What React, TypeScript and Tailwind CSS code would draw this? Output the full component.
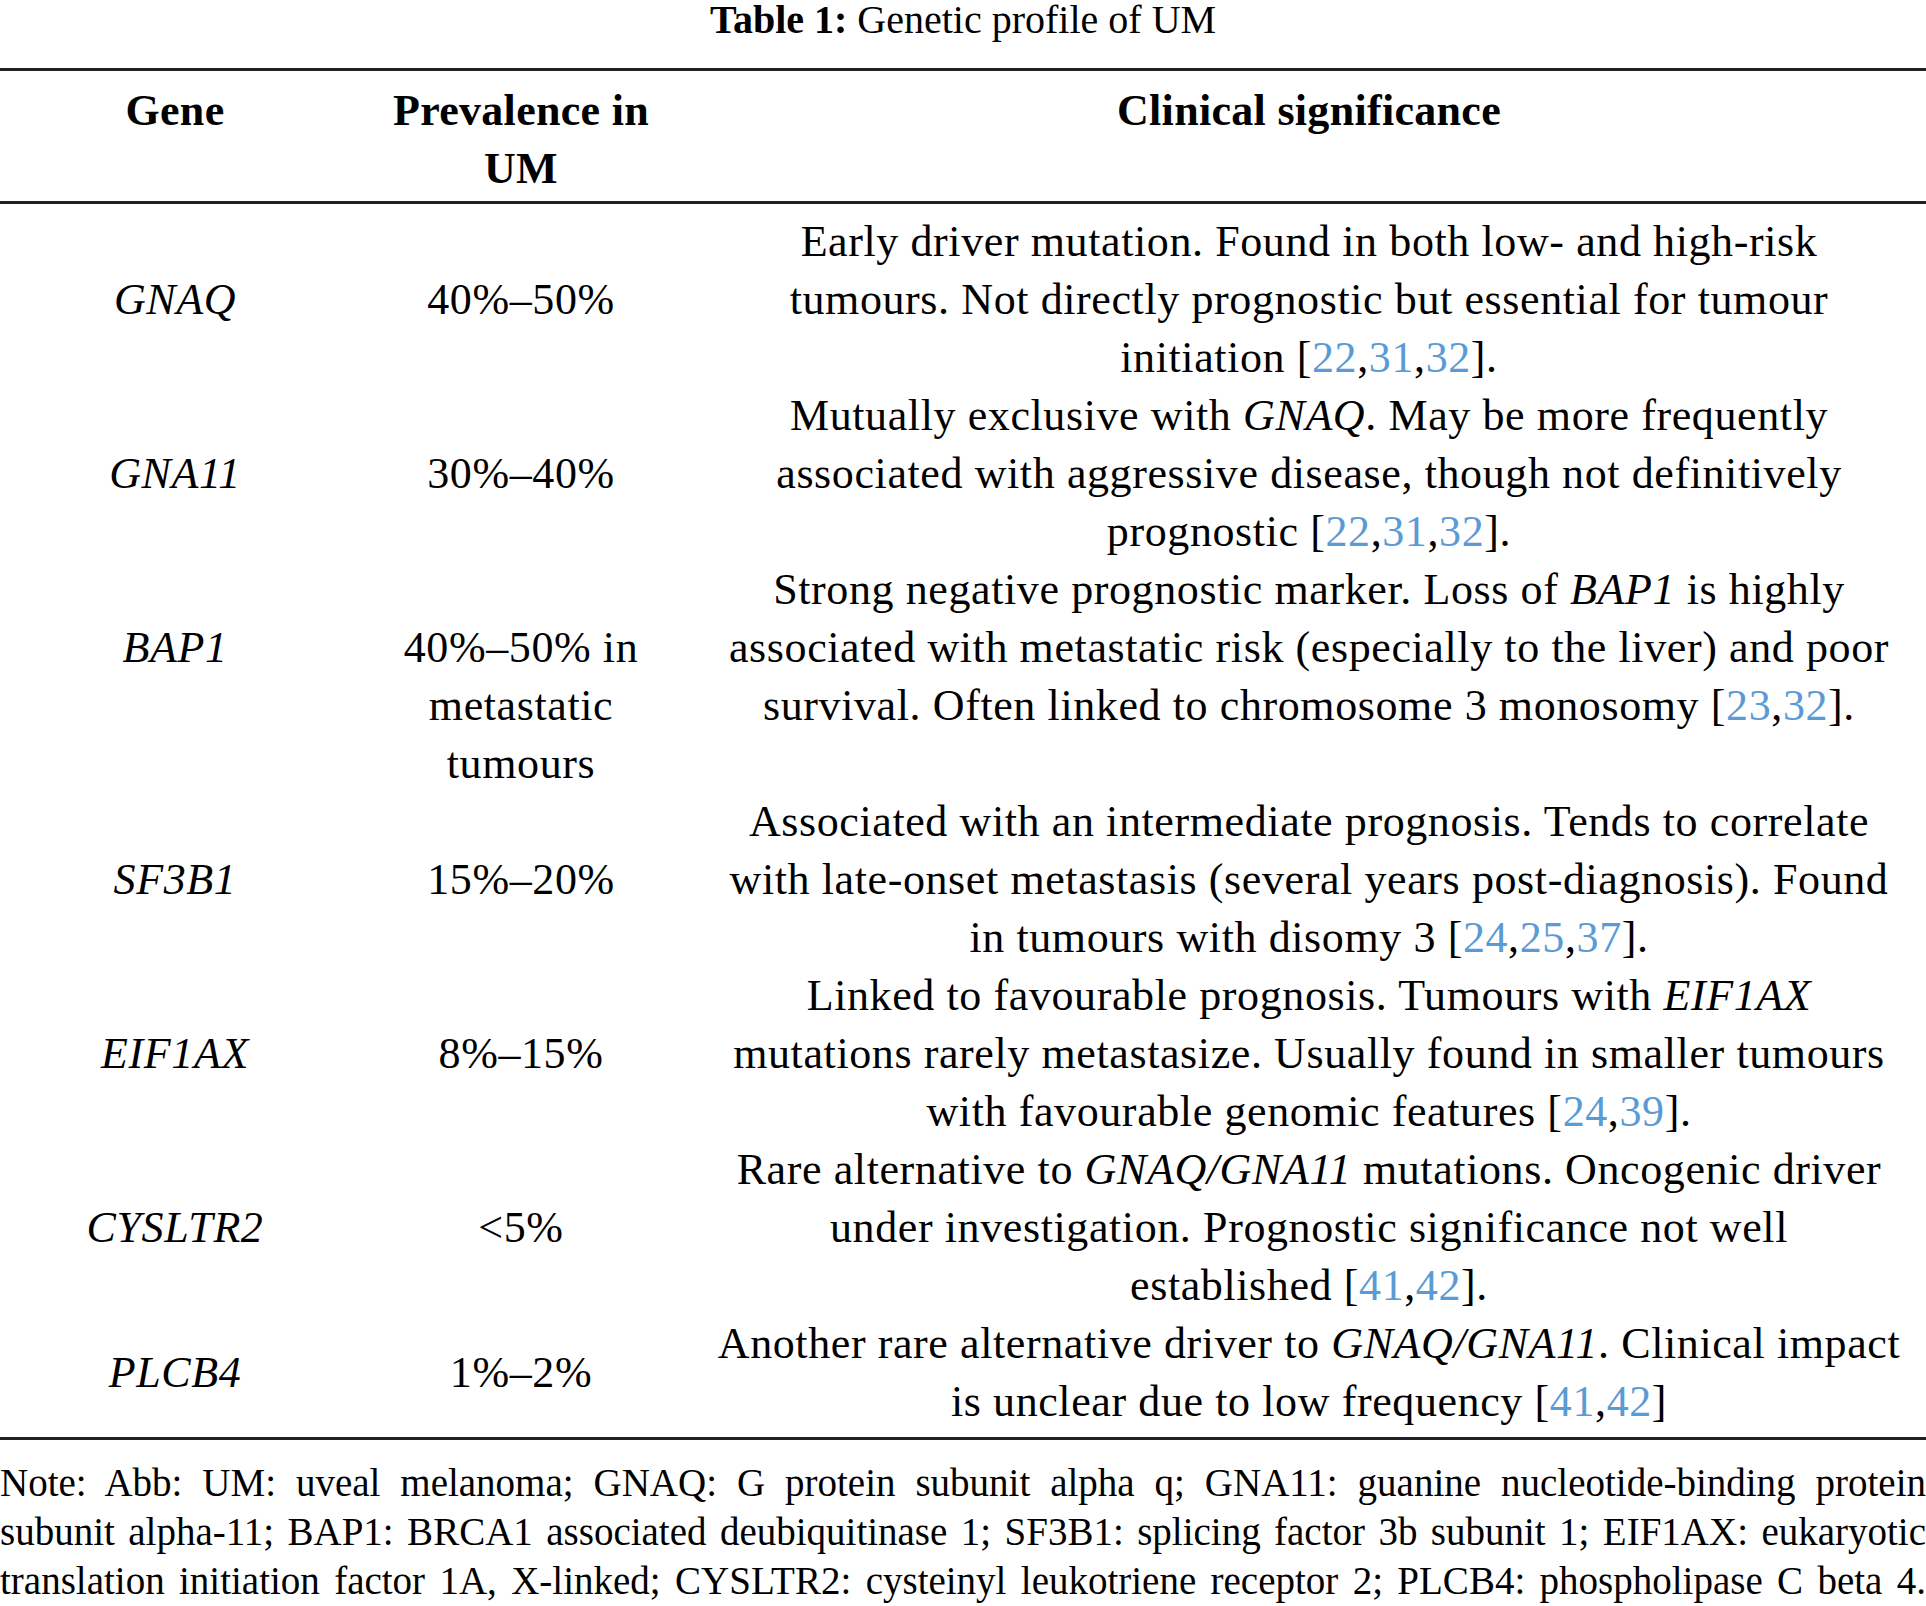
import type { ReactNode } from 'react';

const Cite = ({ n }: { n: string }) => <span className="text-[#5b9bd5]">{n}</span>;

const refs = (...ns: string[]) => (
  <>
    [
    {ns.map((n, i) => (
      <span key={n}>
        {i > 0 && ','}
        <Cite n={n} />
      </span>
    ))}
    ]
  </>
);

type Row = {
  gene: string;
  prev: ReactNode[];
  clin: ReactNode[];
  // BAP1 row sits on 4 line slots, with gene and prevalence pushed down one
  offset?: boolean;
};

const ROWS: Row[] = [
  {
    gene: 'GNAQ',
    prev: ['40%–50%'],
    clin: [
      'Early driver mutation. Found in both low- and high-risk',
      'tumours. Not directly prognostic but essential for tumour',
      <>initiation {refs('22', '31', '32')}.</>,
    ],
  },
  {
    gene: 'GNA11',
    prev: ['30%–40%'],
    clin: [
      <>Mutually exclusive with <i>GNAQ</i>. May be more frequently</>,
      'associated with aggressive disease, though not definitively',
      <>prognostic {refs('22', '31', '32')}.</>,
    ],
  },
  {
    gene: 'BAP1',
    prev: ['40%–50% in', 'metastatic', 'tumours'],
    clin: [
      <>Strong negative prognostic marker. Loss of <i>BAP1</i> is highly</>,
      'associated with metastatic risk (especially to the liver) and poor',
      <>survival. Often linked to chromosome 3 monosomy {refs('23', '32')}.</>,
    ],
    offset: true,
  },
  {
    gene: 'SF3B1',
    prev: ['15%–20%'],
    clin: [
      'Associated with an intermediate prognosis. Tends to correlate',
      'with late-onset metastasis (several years post-diagnosis). Found',
      <>in tumours with disomy 3 {refs('24', '25', '37')}.</>,
    ],
  },
  {
    gene: 'EIF1AX',
    prev: ['8%–15%'],
    clin: [
      <>Linked to favourable prognosis. Tumours with <i>EIF1AX</i></>,
      'mutations rarely metastasize. Usually found in smaller tumours',
      <>with favourable genomic features {refs('24', '39')}.</>,
    ],
  },
  {
    gene: 'CYSLTR2',
    prev: ['<5%'],
    clin: [
      <>Rare alternative to <i>GNAQ/GNA11</i> mutations. Oncogenic driver</>,
      'under investigation. Prognostic significance not well',
      <>established {refs('41', '42')}.</>,
    ],
  },
  {
    gene: 'PLCB4',
    prev: ['1%–2%'],
    clin: [
      <>Another rare alternative driver to <i>GNAQ/GNA11</i>. Clinical impact</>,
      <>is unclear due to low frequency {refs('41', '42')}</>,
    ],
  },
];

const NOTE = [
  'Note: Abb: UM: uveal melanoma; GNAQ: G protein subunit alpha q; GNA11: guanine nucleotide-binding protein',
  'subunit alpha-11; BAP1: BRCA1 associated deubiquitinase 1; SF3B1: splicing factor 3b subunit 1; EIF1AX: eukaryotic',
  'translation initiation factor 1A, X-linked; CYSLTR2: cysteinyl leukotriene receptor 2; PLCB4: phospholipase C beta 4.',
];

const Lines = ({ lines }: { lines: ReactNode[] }) => (
  <div className="flex flex-col items-center">
    {lines.map((l, i) => (
      <div key={i} className="whitespace-nowrap">
        {l}
      </div>
    ))}
  </div>
);

const Rule = () => <div className="h-[3px] bg-[#222]" />;

export default function App() {
  return (
    <div className="w-[1926px] bg-white text-black font-['Liberation_Serif',serif]">
      {/* caption */}
      <div className="text-center text-[40px] leading-[40px]">
        <b>Table 1:</b> Genetic profile of UM
      </div>

      <div className="mt-[28px]">
        <Rule />

        {/* header */}
        <div className="grid grid-cols-[350px_342px_1fr] items-start pt-[11px] pb-[3px] text-[44px] leading-[58px] font-bold tracking-[0.3px] text-center">
          <div>Gene</div>
          <div>
            Prevalence in
            <br />
            UM
          </div>
          <div>Clinical significance</div>
        </div>

        <Rule />

        {/* body */}
        <div className="pt-[9px] pb-[6px] text-[44px] leading-[58px] tracking-[0.6px] text-center">
          {ROWS.map((row) => (
            <div
              key={row.gene}
              className={
                row.offset
                  ? 'grid grid-cols-[350px_342px_1fr] items-start h-[232px]'
                  : 'grid grid-cols-[350px_342px_1fr] items-center'
              }
            >
              <div className={row.offset ? 'pt-[58px] italic' : 'italic'}>{row.gene}</div>
              <div className={row.offset ? 'pt-[58px]' : ''}>
                <Lines lines={row.prev} />
              </div>
              <Lines lines={row.clin} />
            </div>
          ))}
        </div>

        <Rule />
      </div>

      {/* note */}
      <div className="mt-[18px] text-[39px] leading-[49px]">
        {NOTE.map((l, i) => (
          <div key={i} className="text-justify [text-align-last:justify]">
            {l}
          </div>
        ))}
      </div>
    </div>
  );
}
